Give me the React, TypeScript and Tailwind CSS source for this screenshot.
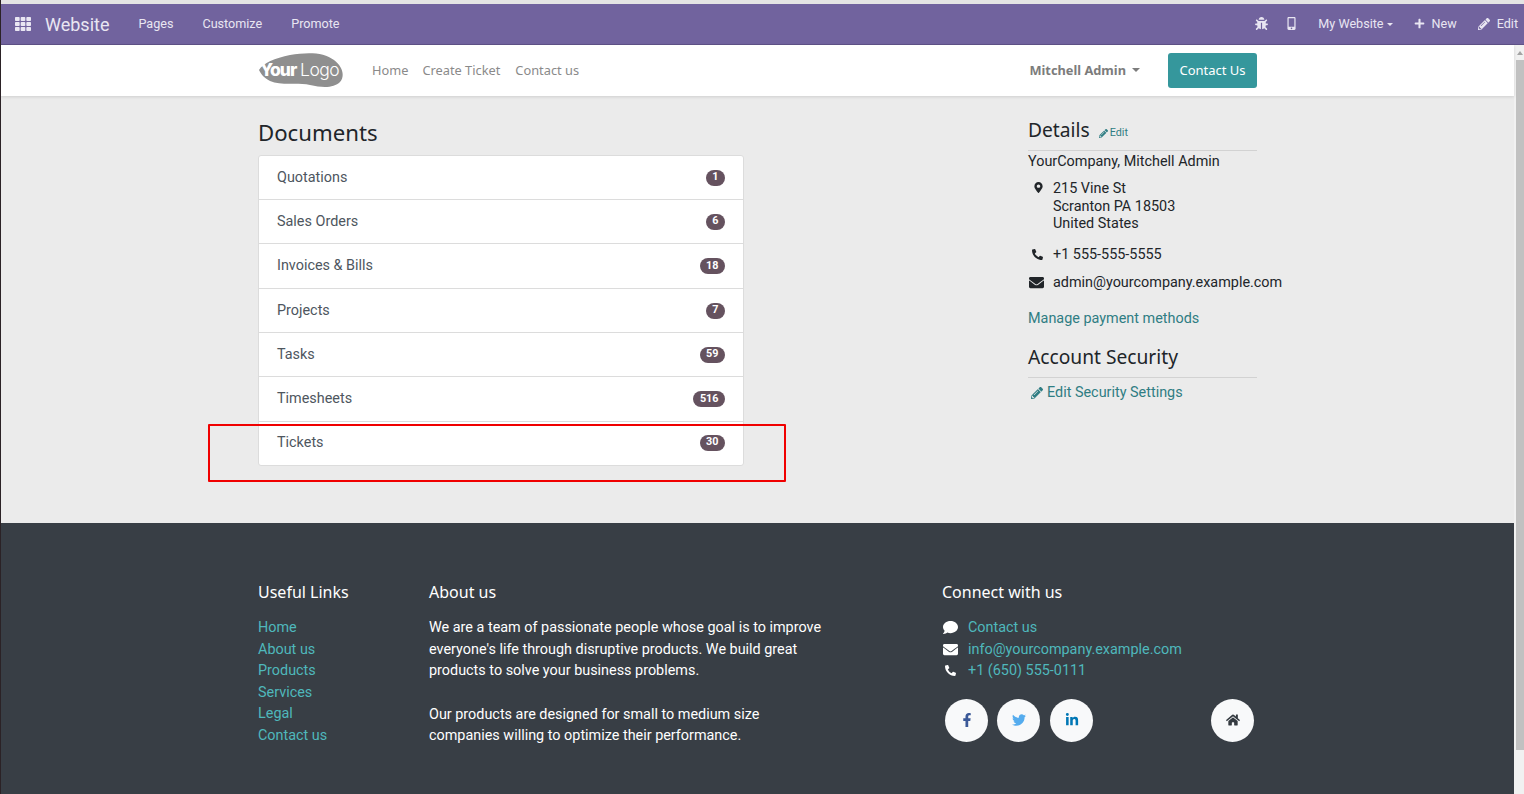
import { FaBug, FaComment, FaEnvelope, FaFacebookF, FaHome, FaLinkedinIn, FaMapMarkerAlt, FaMobileAlt, FaPencilAlt, FaPhoneAlt, FaPlus, FaTh, FaTwitter } from "react-icons/fa";

const documents = [
  { label: "Quotations", count: "1", height: "h-[43px]" },
  { label: "Sales Orders", count: "6", height: "h-[44px]" },
  { label: "Invoices & Bills", count: "18", height: "h-[45px]" },
  { label: "Projects", count: "7", height: "h-[44px]" },
  { label: "Tasks", count: "59", height: "h-[44px]" },
  { label: "Timesheets", count: "516", height: "h-[45px]" },
  { label: "Tickets", count: "30", height: "h-[44px] pb-[2px]" },
];

const usefulLinks = ["Home", "About us", "Products", "Services", "Legal", "Contact us"];

function TopBar() {
  return (
    <div className="flex h-[41px] items-center justify-between border-b border-[#5f5287] bg-[#71639e] pl-[14px] pr-[6px] text-[12.6px] text-[#e9e6f2]">
      <div className="flex items-center">
        <FaTh size={16} />
        <span className="ml-[14px] text-[18px]">Website</span>
        <span className="ml-[29px]">Pages</span>
        <span className="ml-[29px]">Customize</span>
        <span className="ml-[29px]">Promote</span>
      </div>
      <div className="flex items-center">
        <FaBug size={13} />
        <FaMobileAlt size={13} className="ml-[17px]" />
        <span className="ml-[20px]">My Website</span>
        <span className="ml-[3px] mt-[1px] border-x-[3px] border-t-[3px] border-x-transparent border-t-[#e9e6f2]" />
        <FaPlus size={11} className="ml-[21px]" />
        <span className="ml-[7px]">New</span>
        <FaPencilAlt size={12} className="ml-[21px]" />
        <span className="ml-[7px]">Edit</span>
      </div>
    </div>
  );
}

function YourLogo() {
  return (
    <svg width="86" height="37" viewBox="0 0 86 37" className="block">
      <path d="M1 18C5 11 17 6 32 3C49 0 66 0 76 8C85 15 87 24 82 30C76 36 65 36 52 33C39 30 23 34 12 29C6 26 3 22 1 18Z" fill="#8f8f8f" />
      <text x="2" y="24" fontFamily="Inter, sans-serif" fontSize="17.5" fontWeight="800" letterSpacing="-1" fill="#fff">Your</text>
      <text x="42" y="24" fontFamily="Inter, sans-serif" fontSize="17.5" fontWeight="300" letterSpacing="-0.5" fill="#fff">Logo</text>
    </svg>
  );
}

function Header() {
  return (
    <div className="relative z-10 flex h-[51px] bg-white pl-[257px] pr-[257px] shadow-[0_1px_3px_rgba(0,0,0,0.12)] font-['Noto_Sans',sans-serif] text-[12.8px] text-[#8a8a8a]">
      <div className="flex w-full items-center">
        <YourLogo />
        <span className="ml-[28px]">Home</span>
        <span className="ml-[14px]">Create Ticket</span>
        <span className="ml-[15px]">Contact us</span>
        <span className="ml-auto font-bold text-[#7c7c7c]">Mitchell Admin</span>
        <span className="mb-[2px] ml-[6px] border-x-[4.5px] border-t-[4.5px] border-x-transparent border-t-[#7c7c7c]" />
        <span className="ml-[28px] flex h-[35px] w-[89px] items-center justify-center rounded-[3px] bg-[#35979c] text-[13px] text-white">Contact Us</span>
      </div>
    </div>
  );
}

function DocumentList() {
  return (
    <div className="w-[486px]">
      <h2 className="font-['Noto_Sans',sans-serif] text-[22.2px] leading-[31px] text-[#212529]">Documents</h2>
      <div className="mt-[7px] rounded-[3px] border border-[#dcdcdc] bg-white">
        {documents.map((doc, i) => (
          <div key={doc.label} className={`flex ${doc.height} items-center justify-between px-[18px] text-[14.4px] text-[#4e565e] ${i > 0 ? "border-t border-[#dcdcdc]" : ""}`}>
            <span>{doc.label}</span>
            <span className="flex h-[16px] min-w-[19px] items-center justify-center rounded-full bg-[#65525f] px-[6.5px] text-[10.8px] font-bold text-white">{doc.count}</span>
          </div>
        ))}
      </div>
    </div>
  );
}

function DetailsPanel() {
  return (
    <div className="w-[229px] text-[14.4px] text-[#212529]">
      <div className="flex h-[34px] items-start border-b border-[#d2d2d2]">
        <h3 className="font-['Noto_Sans',sans-serif] text-[19.2px] leading-[26px]">Details</h3>
        <span className="ml-[9px] mt-[8px] flex items-center gap-[2px] text-[10.8px] leading-[16px] text-[#2f7d83]">
          <FaPencilAlt size={9} />
          Edit
        </span>
      </div>
      <div className="mt-[1px] leading-[20px] whitespace-nowrap">YourCompany, Mitchell Admin</div>
      <div className="mt-[8px] flex whitespace-nowrap leading-[17.5px]">
        <div className="w-[25px] shrink-0 pl-[5px] pt-[2px]"><FaMapMarkerAlt size={11} /></div>
        <div>215 Vine St<br />Scranton PA 18503<br />United States</div>
      </div>
      <div className="mt-[13px] flex items-center whitespace-nowrap leading-[17.5px]">
        <div className="w-[25px] shrink-0 pl-[4px]"><FaPhoneAlt size={11} /></div>
        +1 555-555-5555
      </div>
      <div className="mt-[11px] flex items-center whitespace-nowrap leading-[17.5px]">
        <div className="w-[25px] shrink-0 pl-[1px]"><FaEnvelope size={15} /></div>
        admin@yourcompany.example.com
      </div>
      <div className="mt-[17px] leading-[20px] text-[#2f7d83]">Manage payment methods</div>
      <h3 className="mt-[13px] border-b border-[#d2d2d2] pb-[5px] font-['Noto_Sans',sans-serif] text-[19.2px] leading-[30px]">Account Security</h3>
      <div className="mt-[5px] flex items-center gap-[4px] pl-[3px] leading-[20px] text-[#2f7d83]">
        <FaPencilAlt size={12} />
        Edit Security Settings
      </div>
    </div>
  );
}

function SocialButton({ children }: { children: React.ReactNode }) {
  return <span className="flex h-[43px] w-[43px] items-center justify-center rounded-full bg-[#f8f9fa]">{children}</span>;
}

function Footer() {
  return (
    <div className="flex h-[271px] bg-[#383e45] pl-[257px] pt-[57px] text-[14.4px] text-white">
      <div className="w-[171px]">
        <h5 className="font-['Noto_Sans',sans-serif] text-[16px] leading-[24px]">Useful Links</h5>
        <div className="mt-[13px] leading-[21.6px] text-[#4fb8bc]">
          {usefulLinks.map((link) => <div key={link}>{link}</div>)}
        </div>
      </div>
      <div className="w-[513px]">
        <h5 className="font-['Noto_Sans',sans-serif] text-[16px] leading-[24px]">About us</h5>
        <p className="mt-[13px] w-[400px] leading-[21.6px]">We are a team of passionate people whose goal is to improve everyone's life through disruptive products. We build great products to solve your business problems.</p>
        <p className="mt-[22px] w-[400px] leading-[21.6px]">Our products are designed for small to medium size companies willing to optimize their performance.</p>
      </div>
      <div className="w-[315px]">
        <h5 className="font-['Noto_Sans',sans-serif] text-[16px] leading-[24px]">Connect with us</h5>
        <div className="mt-[13px] leading-[21.6px] text-[#4fb8bc]">
          <div className="flex items-center"><span className="w-[26px] pl-[1px] text-white"><FaComment size={15} /></span>Contact us</div>
          <div className="flex items-center"><span className="w-[26px] pl-[1px] text-white"><FaEnvelope size={15} /></span>info@yourcompany.example.com</div>
          <div className="flex items-center"><span className="w-[26px] pl-[3px] text-white"><FaPhoneAlt size={11} /></span>+1 (650) 555-0111</div>
        </div>
        <div className="mt-[17px] flex pl-[3px]">
          <SocialButton><FaFacebookF size={14} className="text-[#3b5998]" /></SocialButton>
          <span className="ml-[9px]"><SocialButton><FaTwitter size={14} className="text-[#55acee]" /></SocialButton></span>
          <span className="ml-[10px]"><SocialButton><FaLinkedinIn size={14} className="text-[#0077b5]" /></SocialButton></span>
          <span className="ml-auto mr-[3px]"><SocialButton><FaHome size={14} className="text-[#343a40]" /></SocialButton></span>
        </div>
      </div>
    </div>
  );
}

export default function App() {
  return (
    <div className="relative h-[794px] overflow-hidden border-l border-[#2b2226] bg-white font-['Roboto',sans-serif]">
      <div className="h-[4px] bg-[#e4e4e4]" />
      <TopBar />
      <div className="flex h-[749px]">
        <div className="min-w-0 flex-1">
          <Header />
          <div className="flex h-[427px] justify-between bg-[#ebebeb] pl-[257px] pr-[257px] pt-[21px]">
            <DocumentList />
            <DetailsPanel />
          </div>
          <Footer />
        </div>
        <div className="w-[10px] shrink-0 bg-[#f1f1f1] pl-[2px]">
          <div className="ml-[1px] mt-[6px] h-0 w-0 border-x-[3px] border-b-[4px] border-x-transparent border-b-[#a3a3a3]" />
          <div className="mt-[5px] h-[690px] bg-[#c1c1c1]" />
        </div>
      </div>
      {/* red annotation box from the screenshot */}
      <div className="absolute left-[207px] top-[424px] h-[58px] w-[578px] rounded-[1px] border-2 border-[#f00000]" />
    </div>
  );
}
